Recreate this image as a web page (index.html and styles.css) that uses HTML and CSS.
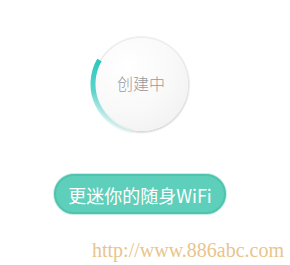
FILE: index.html
```html
<!DOCTYPE html>
<html>
<head>
<meta charset="utf-8">
<link rel="stylesheet" href="styles.css">
</head>
<body>
<div class="page">
  <div class="dial">
    <svg class="arc" width="102" height="102" viewBox="0 0 102 102">
      <defs>
        <linearGradient id="g" x1="0" y1="27" x2="0" y2="99" gradientUnits="userSpaceOnUse">
          <stop offset="0" stop-color="#2cc6bd"/>
          <stop offset="0.45" stop-color="#5fd5ce"/>
          <stop offset="1" stop-color="#d8f3f1" stop-opacity="0.4"/>
        </linearGradient>
      </defs>
      <path d="M 9.43 27 A 48 48 0 0 0 42.67 98.27" fill="none" stroke="url(#g)" stroke-width="5"/>
    </svg>
    <div class="disc"><span class="label">创建中</span></div>
  </div>
  <div class="btn">更迷你的随身WiFi</div>
  <div class="url">http://www.886abc.com</div>
</div>
</body>
</html>
```
FILE: styles.css
```css
html, body {
  margin: 0;
  padding: 0;
  background: #ffffff;
}
.page {
  width: 280px;
  display: flex;
  flex-direction: column;
  align-items: center;
  padding-top: 33px;
}
.dial {
  position: relative;
  width: 102px;
  height: 102px;
  display: flex;
  align-items: center;
  justify-content: center;
  margin-left: 2px;
}
.arc {
  position: absolute;
  left: 0;
  top: 0;
}
.disc {
  width: 93px;
  height: 93px;
  border-radius: 50%;
  background: radial-gradient(circle at 35% 30%, #ffffff 0%, #f9f9f9 50%, #eeeeee 100%);
  box-shadow: 0 1px 3px rgba(0, 0, 0, 0.16), 0 0 0 2px #f2f2f2;
  display: flex;
  align-items: center;
  justify-content: center;
}
.label {
  font-family: "Noto Sans CJK SC", "Noto Sans", sans-serif;
  font-size: 16px;
  font-weight: 300;
  color: #999999;
  margin-top: -3px;
}
.btn {
  margin-top: 39px;
  width: 168px;
  height: 35px;
  border-radius: 20px;
  background: #5dcfba;
  border: 2px solid #4fc3ad;
  box-shadow: 0 0 0 1px #c9eee6;
  color: #ffffff;
  font-family: "Noto Sans CJK SC", "Noto Sans", sans-serif;
  font-size: 18px;
  display: flex;
  align-items: center;
  justify-content: center;
  padding-top: 1px;
}
.url {
  align-self: flex-start;
  margin-top: 25px;
  margin-left: 92px;
  font-family: "Liberation Serif", serif;
  font-size: 20px;
  color: #e8c58c;
  white-space: nowrap;
}
```
